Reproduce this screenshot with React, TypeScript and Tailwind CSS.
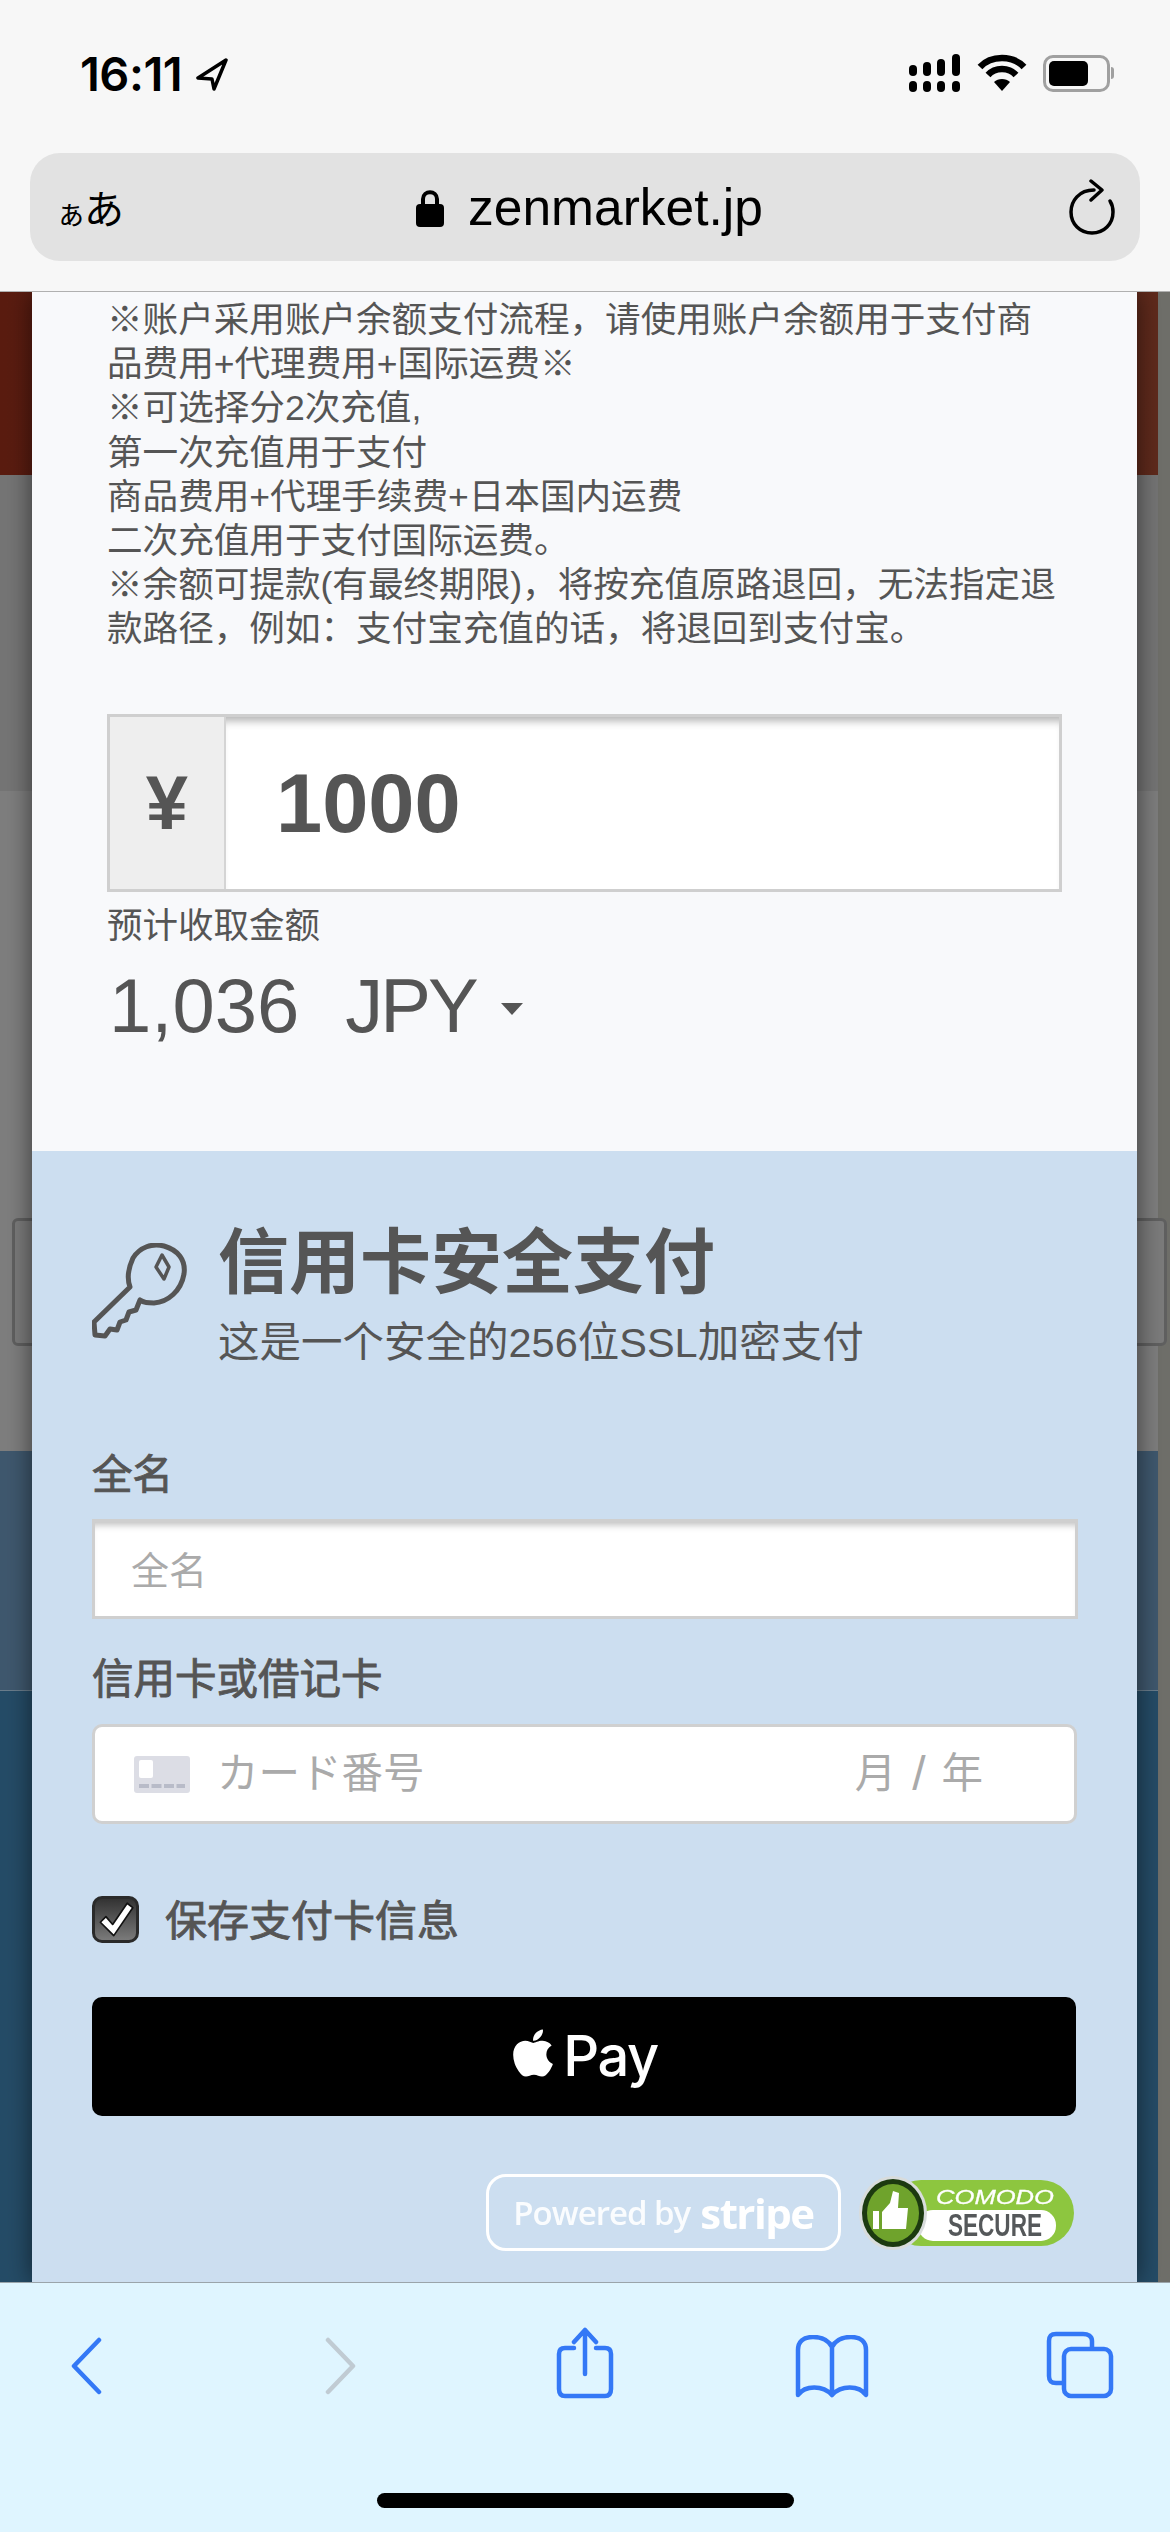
import { FaApple } from "react-icons/fa";

const sans = "font-['Liberation_Sans','Noto_Sans_CJK_SC',sans-serif]";

function StatusBar() {
  return (
    <div className="flex h-[153px] items-start justify-between pl-[80px] pr-[56px] pt-[54px]">
      <div className="flex items-center gap-[13px]">
        <span className="font-['Inter',sans-serif] text-[47px] leading-[40px] font-semibold tracking-[-0.5px] text-black">16:11</span>
        <svg width="34" height="34" viewBox="0 0 34 34" fill="none" stroke="#000" strokeWidth="3.5" strokeLinejoin="round">
          <path d="M31 3 L3 21 L17 22 L19 32 Z" />
        </svg>
      </div>
      <div className="flex items-center gap-[16px]">
        <svg width="52" height="38" viewBox="0 0 52 38" fill="#000">
          <rect x="0" y="11" width="8" height="11" rx="4" />
          <rect x="14" y="8" width="8" height="14" rx="4" />
          <rect x="28" y="5" width="8" height="17" rx="4" />
          <rect x="43" y="0" width="8" height="22" rx="4" />
          <rect x="0" y="27" width="8" height="11" rx="4" />
          <rect x="14" y="27" width="8" height="11" rx="4" />
          <rect x="28" y="27" width="8" height="11" rx="4" />
          <rect x="43" y="27" width="8" height="11" rx="4" />
        </svg>
        <svg width="50" height="38" viewBox="0 0 50 38" fill="none" stroke="#000" strokeWidth="6.5">
          <path d="M3 13 C14 1 36 1 47 13" />
          <path d="M11 21 C18 13 32 13 39 21" />
          <path d="M25 37 L17 28 C21 24 29 24 33 28 Z" fill="#000" stroke="none" />
        </svg>
        <div className="flex items-center">
          <div className="flex h-[37px] w-[67px] items-center rounded-[10px] border-[3px] border-[#a0a0a0] pl-[3px]">
            <div className="h-[25px] w-[39px] rounded-[5px] bg-black" />
          </div>
          <div className="ml-[1px] h-[12px] w-[3px] rounded-r-full bg-[#a0a0a0]" />
        </div>
      </div>
    </div>
  );
}

function UrlBar() {
  return (
    <div className="mx-[30px] flex h-[108px] items-center justify-between rounded-[30px] bg-[#e2e2e2] pl-[26px] pr-[25px]">
      <span className={`flex w-[70px] items-baseline ${sans} leading-none text-black`}>
        <span className="font-['Noto_Sans_CJK_JP',sans-serif] text-[30px]">ぁ</span>
        <span className="ml-[-2px] font-['Noto_Sans_CJK_JP',sans-serif] text-[40px]">あ</span>
      </span>
      <div className="flex items-center gap-[24px] pr-[16px]">
        <svg width="28" height="40" viewBox="0 0 28 40" fill="#000">
          <path d="M7 19 V12 C7 3 21 3 21 12 V19" fill="none" stroke="#000" strokeWidth="4" />
          <rect x="0" y="17" width="28" height="23" rx="4" />
        </svg>
        <span className={`${sans} text-[51.5px] leading-[60px] text-black`}>zenmarket.jp</span>
      </div>
      <svg width="46" height="56" viewBox="0 0 46 56" fill="none" stroke="#000" strokeWidth="3.5" strokeLinecap="round" strokeLinejoin="round">
        <path d="M25 11 C10 11 2 22 2 33 C2 45 11 54 23 54 C35 54 44 45 44 33 C44 28 43 25 41 22" />
        <path d="M22 2 L33 11 L22 21" />
      </svg>
    </div>
  );
}

function PageBackdrop() {
  return (
    <div className="absolute inset-0 flex">
      <div className="flex flex-1 flex-col">
        <div className="h-[183px] bg-[linear-gradient(90deg,#5a1c10_0%,#5f2a1c_100%)]" />
        <div className="h-[316px] bg-[#757575]" />
        <div className="h-[660px] bg-[#7e7e7e]" />
        <div className="h-[239px] bg-[#3f586e]" />
        <div className="flex-1 border-t border-[#6a7d8c] bg-[#254c67]" />
      </div>
      <div className="w-[12px] bg-[#6f6f6a]" />
      <div className="absolute left-[12px] right-[3px] top-[926px] h-[128px] rounded-[6px] border-[3px] border-[#606060] bg-[#7b7b7b]" />
    </div>
  );
}

function KeyIcon() {
  return (
    <svg width="96" height="96" viewBox="0 0 96 96" fill="none" stroke="#555" strokeWidth="5" strokeLinejoin="round">
      <path d="M38 44 C35 36 36 26 41 15 C48 4 60 0 72 3 C86 7 94 17 92 31 C89 48 76 59 62 60 C56 60 52 60 48 57 L44 67 L37 69 L34 77 L28 79 L25 87 L18 86 L13 93 L3 92 L2 79 Z" />
      <path d="M70 12 L77 24 L72 36 L64 24 Z" strokeWidth="3.5" />
    </svg>
  );
}

function ComodoBadge() {
  return (
    <svg width="216" height="76" viewBox="0 0 216 76" className="blur-[0.7px]">
      <rect x="30" y="5" width="186" height="66" rx="33" fill="#8dc63f" />
      <rect x="60" y="35" width="138" height="31" rx="15" fill="#fff" />
      <ellipse cx="35" cy="38" rx="34" ry="37" fill="#d8dcdc" />
      <ellipse cx="35" cy="38" rx="31" ry="34" fill="#1c3a10" />
      <ellipse cx="35" cy="38" rx="26" ry="29" fill="#6fa32c" />
      <path d="M15 36 H21 V54 H15 Z M24 37 L32 28 L35 16 L41 18 L40 33 H50 L48 54 H24 Z" fill="#fff" />
      <text x="78" y="29" textLength="118" lengthAdjust="spacingAndGlyphs" fontFamily="Liberation Sans, sans-serif" fontStyle="italic" fontSize="21" fill="#fff" stroke="#fff" strokeWidth="0.3">COMODO</text>
      <text x="90" y="61" textLength="94" lengthAdjust="spacingAndGlyphs" fontFamily="Liberation Sans, sans-serif" fontWeight="700" fontSize="31" fill="#55585a">SECURE</text>
    </svg>
  );
}

function Modal() {
  return (
    <div className={`absolute bottom-0 left-[32px] top-0 w-[1105px] bg-[#f8f9fb] shadow-[0_0_24px_rgba(0,0,0,0.55)] ${sans} text-[#555]`}>
      <div className="h-[859px] px-[75px] pt-[6px]">
        <p className="text-[35.6px] leading-[44.2px]">
          ※账户采用账户余额支付流程，请使用账户余额用于支付商品费用+代理费用+国际运费※
          <br />
          ※可选择分2次充值,
          <br />
          第一次充值用于支付
          <br />
          商品费用+代理手续费+日本国内运费
          <br />
          二次充值用于支付国际运费。
          <br />
          ※余额可提款(有最终期限)，将按充值原路退回，无法指定退款路径，例如：支付宝充值的话，将退回到支付宝。
        </p>
        <div className="mt-[62px] flex h-[178px] w-[955px] border-[3px] border-[#cfcfcf]">
          <div className="flex w-[116px] items-center justify-center border-r-[2px] border-[#d4d4d4] bg-[#eeeeee] text-[76px] font-bold">¥</div>
          <div className="flex flex-1 items-center bg-white pl-[50px] pt-[4px] text-[83px] font-bold shadow-[inset_0_10px_8px_-6px_rgba(0,0,0,0.3)]">1000</div>
        </div>
        <div className="mt-[12px] text-[35.5px] leading-[44px]">预计收取金额</div>
        <div className="mt-[18px] flex h-[80px] items-center pl-[2px] text-[76px] leading-[80px]">
          <span>1,036</span>
          <span className="ml-[46px] tracking-[-3px]">JPY</span>
          <span className="ml-[25px] mt-[6px] h-0 w-0 border-x-[11px] border-t-[12px] border-x-transparent border-t-[#555]" />
        </div>
      </div>
      <div className="h-[1131px] overflow-hidden bg-[#ccdef0] px-[60px] pt-[72px]">
        <div className="flex h-[142px] items-start gap-[30px]">
          <div className="pt-[20px]">
            <KeyIcon />
          </div>
          <div>
            <div className="text-[71px] leading-[80px] font-bold">信用卡安全支付</div>
            <div className="mt-[17px] text-[41.5px] leading-[46px]">这是一个安全的256位SSL加密支付</div>
          </div>
        </div>
        <div className="mt-[86px] text-[40.5px] leading-[48px] [-webkit-text-stroke:0.9px_#555]">全名</div>
        <div className="mt-[20px] flex h-[100px] w-[986px] items-center border-[3px] border-[#cfcfcf] bg-white pl-[36px] pt-[4px] text-[38px] text-[#aaa] shadow-[inset_0_8px_7px_-5px_rgba(0,0,0,0.25)]">全名</div>
        <div className="mt-[37px] text-[41.5px] leading-[48px] [-webkit-text-stroke:0.9px_#555]">信用卡或借记卡</div>
        <div className="mt-[20px] flex h-[100px] w-[985px] items-center justify-between rounded-[10px] border-[3px] border-[#d0d0d0] bg-white pl-[39px] pr-[91px] text-[41.5px] text-[#aaa]">
          <div className="flex items-center gap-[27px]">
            <svg width="56" height="37" viewBox="0 0 56 37">
              <rect width="56" height="37" rx="3" fill="#dcdde5" />
              <rect x="5" y="4" width="14" height="18" rx="2" fill="#fff" />
              <path d="M5 30 H51" stroke="#b8bbc8" strokeWidth="4" strokeDasharray="10 2.5" />
            </svg>
            <span>カード番号</span>
          </div>
          <div className="flex items-center gap-[16px]">
            <span>月</span>
            <span className="text-[48px]">/</span>
            <span>年</span>
          </div>
        </div>
        <label className="mt-[72px] flex h-[47px] items-center gap-[26px]">
          <span className="flex h-[47px] w-[47px] items-center justify-center rounded-[10px] border-[3px] border-[#2a2a2a] bg-[linear-gradient(180deg,#333333,#7a7a7a)]">
            <svg width="38" height="38" viewBox="0 0 34 34" fill="#fff" stroke="#111" strokeWidth="1.5" strokeLinejoin="round">
              <path d="M3 19 L8 14 L14 21 L27 2 L32 6 L15 31 Z" />
            </svg>
          </span>
          <span className="pt-[5px] text-[42px] leading-[48px] [-webkit-text-stroke:0.9px_#555]">保存支付卡信息</span>
        </label>
        <div className="mt-[54px] flex h-[119px] w-[984px] items-center justify-center gap-[7px] rounded-[10px] bg-black text-white">
          <FaApple className="mb-[8px] h-[54px] w-[46px]" />
          <span className="mb-[2px] font-['Inter',sans-serif] text-[56px] leading-[60px] font-medium tracking-[-1.5px]">Pay</span>
        </div>
        <div className="mt-[58px] flex w-[986px] items-center justify-end gap-[17px] pr-[4px]">
          <div className="flex h-[77px] w-[355px] items-center justify-center gap-[10px] rounded-[20px] border-[3px] border-white font-['Open_Sans',sans-serif] text-white blur-[0.6px]">
            <span className="text-[33px] leading-none font-semibold tracking-[-1px] opacity-90">Powered by</span>
            <span className="text-[42px] leading-none font-bold tracking-[-1.5px]">stripe</span>
          </div>
          <ComodoBadge />
        </div>
      </div>
    </div>
  );
}

function Toolbar() {
  return (
    <div className="relative z-10 flex h-[250px] flex-col border-t border-[#9aa4aa] bg-[#dff5ff]">
      <div className="flex items-start pl-[70px] pt-[44px]">
        <svg width="32" height="58" viewBox="0 0 32 58" fill="none" stroke="#3478f6" strokeWidth="4.5" strokeLinecap="round" strokeLinejoin="round" className="mt-[10px]">
          <path d="M29 3 L4 29 L29 55" />
        </svg>
        <svg width="32" height="58" viewBox="0 0 32 58" fill="none" stroke="#c0cbd3" strokeWidth="4.5" strokeLinecap="round" strokeLinejoin="round" className="ml-[223px] mt-[10px]">
          <path d="M3 3 L28 29 L3 55" />
        </svg>
        <svg width="58" height="72" viewBox="0 0 58 72" fill="none" stroke="#3478f6" strokeWidth="4.5" strokeLinecap="round" strokeLinejoin="round" className="ml-[199px]">
          <path d="M18 21 H9 C5 21 3 23 3 27 V62 C3 67 5 69 9 69 H49 C53 69 55 67 55 62 V27 C55 23 53 21 49 21 H40" />
          <path d="M29 47 V3 M18 15 L29 3 L40 15" />
        </svg>
        <svg width="74" height="64" viewBox="0 0 74 64" fill="none" stroke="#3478f6" strokeWidth="4.5" strokeLinecap="round" strokeLinejoin="round" className="ml-[181px] mt-[8px]">
          <path d="M37 12 C33 4 26 2 18 2 C8 2 3 7 3 15 V60 C10 50 28 50 37 60 C46 50 64 50 71 60 V15 C71 7 66 2 56 2 C48 2 41 4 37 12 Z M37 12 V60" />
        </svg>
        <svg width="68" height="68" viewBox="0 0 68 68" fill="none" stroke="#3478f6" strokeWidth="4.5" strokeLinejoin="round" className="ml-[177px] mt-[4px]">
          <path d="M18 52 H10 C5 52 3 50 3 45 V10 C3 5 5 3 10 3 H37 C42 3 46 5 46 10 V18" />
          <rect x="18" y="18" width="47" height="47" rx="7" />
        </svg>
      </div>
      <div className="mt-auto mb-[24px] h-[15px] w-[417px] self-center rounded-full bg-black" />
    </div>
  );
}

export default function App() {
  return (
    <div className="flex h-[2532px] w-[1170px] flex-col overflow-hidden">
      <div className="relative z-10 h-[292px] border-b border-[#b0b0b0] bg-[#f7f7f7]">
        <StatusBar />
        <UrlBar />
      </div>
      <div className="relative flex-1">
        <PageBackdrop />
        <Modal />
      </div>
      <Toolbar />
    </div>
  );
}
